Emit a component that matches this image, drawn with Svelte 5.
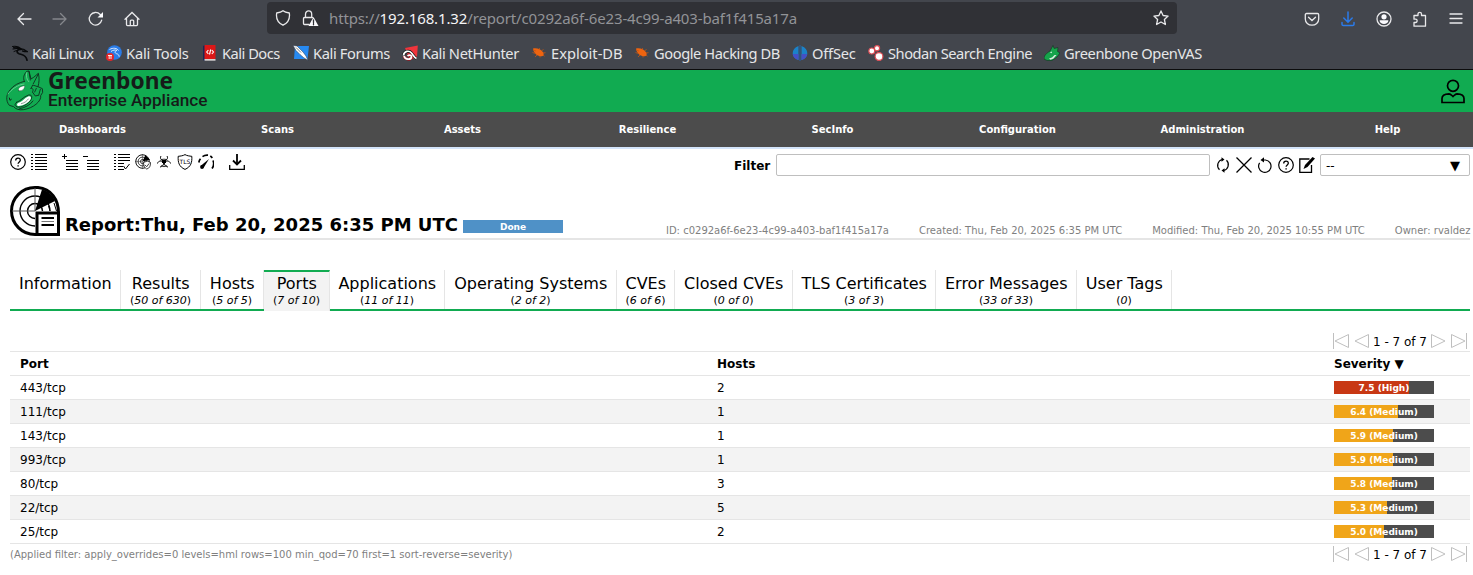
<script>
  const bookmarks = [
    { icon: 'kali', label: 'Kali Linux', w: 94, ls: -0.44 },
    { icon: 'tools', label: 'Kali Tools', w: 96, ls: -0.17 },
    { icon: 'docs', label: 'Kali Docs', w: 91, ls: -0.5 },
    { icon: 'forums', label: 'Kali Forums', w: 109, ls: -0.36 },
    { icon: 'hunter', label: 'Kali NetHunter', w: 129, ls: -0.36 },
    { icon: 'bug', label: 'Exploit-DB', w: 103, ls: 0 },
    { icon: 'bug', label: 'Google Hacking DB', w: 158, ls: -0.42 },
    { icon: 'offsec', label: 'OffSec', w: 76, ls: -0.2 },
    { icon: 'shodan', label: 'Shodan Search Engine', w: 176, ls: -0.48 },
    { icon: 'openvas', label: 'Greenbone OpenVAS', w: 170, ls: -0.38 }
  ];
  const menu = ['Dashboards', 'Scans', 'Assets', 'Resilience', 'SecInfo', 'Configuration', 'Administration', 'Help'];
  const tabs = [
    { label: 'Information', count: '', w: 111 },
    { label: 'Results', count: '50 of 630', w: 80 },
    { label: 'Hosts', count: '5 of 5', w: 63 },
    { label: 'Ports', count: '7 of 10', w: 66, active: true },
    { label: 'Applications', count: '11 of 11', w: 115 },
    { label: 'Operating Systems', count: '2 of 2', w: 172 },
    { label: 'CVEs', count: '6 of 6', w: 58 },
    { label: 'Closed CVEs', count: '0 of 0', w: 118 },
    { label: 'TLS Certificates', count: '3 of 3', w: 143 },
    { label: 'Error Messages', count: '33 of 33', w: 141 },
    { label: 'User Tags', count: '0', w: 95 }
  ];
  const rows = [
    { port: '443/tcp', hosts: 2, severity: 7.5 },
    { port: '111/tcp', hosts: 1, severity: 6.4 },
    { port: '143/tcp', hosts: 1, severity: 5.9 },
    { port: '993/tcp', hosts: 1, severity: 5.9 },
    { port: '80/tcp', hosts: 3, severity: 5.8 },
    { port: '22/tcp', hosts: 5, severity: 5.3 },
    { port: '25/tcp', hosts: 2, severity: 5.0 }
  ];
</script>

{#snippet favicon(name)}
  <svg class="fav" viewBox="0 0 16 16" width="16" height="16">
    {#if name === 'kali'}
      <g fill="none" stroke="#08090b" stroke-linecap="round">
        <path d="M.5 1.500C5 .5 8 2.500 10 4.500M1 4C4 3 7 3.500 9 4.500M1.500 2.500l6 .5" stroke-width="1.100" />
        <path d="M9 4.300C4.500 4 4 7.500 7 8.700c3 1.100 7 .8 8 6.500" stroke-width="1.700" />
        <path d="M9 4.300c2-.5 3.500 0 4 1l2 1.200-2.500 0-2-.5" stroke-width="1.300" />
        <path d="M2 6.500l2.500-1" stroke-width="1" />
      </g>
    {:else if name === 'tools'}
      <circle cx="8.500" cy="7.500" r="7.300" fill="#2a7ce8" />
      <path d="M3.500 4.500C7 2.500 11 3 12.500 5.500M5 6.500c2-1.500 4-2 6-1-2.500.5-2.500 2.500-.5 3.200 2 .5 2.500 1.500 2.700 3" fill="none" stroke="#dcebff" stroke-width="1" />
      <circle cx="4" cy="12" r="4" fill="#e32629" />
      <path d="M2 10.500h4M3.200 10.500v3.500M5 10.500v3.500" stroke="#fff" stroke-width=".9" />
    {:else if name === 'docs'}
      <path d="M1 1l2-1v16l-2-1z" fill="#1c2757" />
      <path d="M2.500 0h11v14h-11z" fill="#dc1717" />
      <path d="M2.500 14h11v1.700h-11z" fill="#d5d2d2" />
      <path d="M6.400 5L4.700 7l1.700 2M9.800 5l1.700 2-1.700 2M8.700 4.500l-1.200 5" fill="none" stroke="#fff" stroke-width="1.100" />
    {:else if name === 'forums'}
      <path d="M2 1h14l-1.500 13H1z" fill="#278af2" />
      <path d="M0 .5l4 .5 6 6 3 4 2 4.500-4.500-3-3.500-3-4-4z" fill="#fff" stroke="#24354b" stroke-width=".5" />
      <path d="M3 2.500l5 5" fill="none" stroke="#222" stroke-width=".6" />
    {:else if name === 'hunter'}
      <path d="M3 3L15.800.5 15 12 8 15z" fill="#ef353c" />
      <path d="M1.500 10.500C2 6 7 5 9.500 8c2 2.500 2.500 4 5 5.500" fill="none" stroke="#111" stroke-width="3" />
      <path d="M2 11c1 4 7 4 7.500 1C9.500 10 7 9.500 5.500 11" fill="none" stroke="#a3141d" stroke-width="3" />
      <path d="M1.500 10.500C2 6 7 5 9.500 8c2 2.500 2.500 4 5 5.500M2 11c1 4 7 4 7.500 1C9.500 10 7 9.500 5.500 11" fill="none" stroke="#fff" stroke-width="1.700" />
    {:else if name === 'bug'}
      <path d="M2 3.500c4-.8 8 .7 10 3.700 1.500 2.400.4 4.300-2.500 4.100C6 11 2.500 8 2 3.500z" fill="#ee6410" />
      <path d="M1.500 7.500l3 1M4 12l2-2M9 12.500v-1.500M8 4.500l.7-1.500M11 5.500l1.500-1M12 8l2.500-.3M12 10l1.500 1.200M2 5l3 1" stroke="#c75512" stroke-width=".8" />
    {:else if name === 'offsec'}
      <path d="M6.500 1v14C-1 13-1.500 4 6.500 1zM9.500 1v14c7.500-2 8-11 0-14z" fill="#1b82c9" />
      <path d="M6.500 9v6C3 14 1 12 .7 9zM9.500 9v6c3.500-1 5.500-3 5.800-6z" fill="#4450c6" />
      <path d="M8 0v16" stroke="#2462a8" stroke-width="1" />
    {:else if name === 'shodan'}
      <g fill="#fff" stroke="#dc4c54" stroke-width="1.200"><circle cx="3.800" cy="6" r="3" /><circle cx="9" cy="3.200" r="2.600" /><circle cx="11" cy="11.500" r="3.900" /></g>
    {:else}
      <path d="M9 .5l1.200 3L14 2.500l-.4 4L16 8l-3 4-5 3.500H3L0 14c0-4 3-6 6-8z" fill="#16a34b" stroke="#12331f" stroke-width=".6" />
      <path d="M5 13.500l3-1 2.500-2.500h2l-3 3.500-3 1.300z" fill="#dbe8df" /><path d="M6 7.500l2-1-.5 1.700z" fill="#fff" />
    {/if}
  </svg>
{/snippet}

{#snippet help()}
  <svg width="16" height="16" viewBox="0 0 16 16" fill="none" stroke="#000"><circle cx="8" cy="8" r="7.300" stroke-width="1.200" /><path d="M5.700 6.400C5.700 3.300 10.300 3.300 10.300 6.200c0 1.700-2.200 1.700-2.200 3.600" stroke-width="1.300" /><path d="M7.400 11.200h1.400v1.400H7.400z" fill="#000" stroke="none" /></svg>
{/snippet}

{#snippet pager()}
  <svg width="16" height="16" viewBox="0 0 16 16"><path d="M.5 0v16M15.500 1.500v13L2 8z" /></svg>
  <svg width="16" height="16" viewBox="0 0 16 16"><path d="M14.500 1.500v13L1 8z" /></svg>
  <span>1 - 7 of 7</span>
  <svg width="16" height="16" viewBox="0 0 16 16"><path d="M1.500 1.500v13L15 8z" /></svg>
  <svg width="16" height="16" viewBox="0 0 16 16"><path d="M15.500 0v16M.5 1.500v13L14 8z" /></svg>
{/snippet}

<div class="page">
  <div class="chrome">
    <div class="navbar">
      <div class="navbtns">
        <svg width="16" height="16" viewBox="0 0 16 16"><path d="M15 8H2M7.500 2.500L2 8l5.500 5.500" /></svg>
        <svg class="dim" width="16" height="16" viewBox="0 0 16 16"><path d="M1 8h13M8.500 2.500L14 8l-5.500 5.500" /></svg>
        <svg width="16" height="16" viewBox="0 0 16 16"><path d="M13.700 9.200A6.300 6.300 0 1 1 12.200 3.500L14 5.300" /><path d="M15 1v5.500H9.500z" fill="#fbfbfe" stroke="none" /></svg>
        <svg width="16" height="16" viewBox="0 0 16 16"><path d="M1 8.300L8 1.500l7 6.800M2.500 7v6.600c0 .6.400 1 1 1h9c.6 0 1-.4 1-1V7M6.300 14.500v-4.500c0-.6.300-.9.900-.9h1.600c.6 0 .9.300.9.900v4.500" /></svg>
      </div>
      <div class="urlbar">
        <svg width="16" height="16" viewBox="0 0 16 16"><path d="M8 .8c2 1.700 4.500 2 6.300 2.200.7 4.500-.4 9.500-6.300 12.200C2.100 12.500 1 7.500 1.700 3 3.500 2.800 6 2.500 8 .8z" /></svg>
        <svg class="lock" width="17" height="16" viewBox="0 0 17 16"><path d="M7 14.500H2.500c-.6 0-1-.4-1-1v-5c0-.7.400-1 1-1h8M3.500 7.500V4.300C3.500-.2 9.700-.2 9.700 4.300v3" /><path d="M11.500 7l5 9h-10z" fill="#fbfbfe" stroke="none" /><path d="M11.500 9.800v3M11.500 13.700v1.100" stroke="#303136" /></svg>
        <span class="url">https://<b>192.168.1.32</b>/report/c0292a6f-6e23-4c99-a403-baf1f415a17a</span>
        <svg width="16" height="16" viewBox="0 0 16 16"><path d="M8 .9l2.100 4.600 5 .6-3.700 3.400 1 5L8 12l-4.400 2.500 1-5L.9 6.100l5-.6z" stroke-linejoin="round" /></svg>
      </div>
      <div class="tools">
        <svg width="16" height="16" viewBox="0 0 16 16"><path d="M2.500 2.500h11c.7 0 1.200.5 1.200 1.200V8c0 3.700-3 6.200-6.700 6.200S1.300 11.700 1.300 8V3.700c0-.7.500-1.200 1.200-1.200zM4.500 6.200L8 9.500l3.500-3.300" /></svg>
        <svg class="blue" width="16" height="16" viewBox="0 0 16 16"><path d="M8 1v10M3.800 7L8 11.200 12.200 7M2 11.500v1.700c0 .8.500 1.300 1.300 1.300h9.400c.8 0 1.300-.5 1.300-1.300v-1.700" /></svg>
        <svg width="16" height="16" viewBox="0 0 16 16"><circle cx="8" cy="8" r="7" /><circle cx="8" cy="5.800" r="2.600" fill="#fbfbfe" stroke="none" /><path d="M3.600 9.300h8.800c0 5-8.800 5-8.800 0z" fill="#fbfbfe" stroke="none" /></svg>
        <svg width="16" height="16" viewBox="0 0 16 16"><path d="M2 15.200V11.500h1.500c2.200 0 2.200-3.300 0-3.300H2V4.500h4V3c0-2.300 3.500-2.300 3.500 0v1.500h4v10.700z" stroke-linejoin="round" /></svg>
        <svg width="16" height="16" viewBox="0 0 16 16"><path d="M2 3h12M2 7.500h12M2 12h12" /></svg>
      </div>
    </div>
    <div class="bookmarks">
      {#each bookmarks as b}
        <div class="bookmark" style="width:{b.w}px">{@render favicon(b.icon)}<span style="letter-spacing:{b.ls}px">{b.label}</span></div>
      {/each}
    </div>
  </div>

  <header>
    <svg class="logo" width="220" height="42" viewBox="0 0 220 42">
      <g transform="scale(.33333) translate(0 -12)" stroke-linejoin="round" stroke-linecap="round">
        <path d="M73 46C68 35 72 25 80 16l7-1 6 24 8-5 14-12c4 15 2 28-1 40l13 6 1 11-6 10c3 16-22 38-52 42-13 2-24-2-29-9l-13-4c-12-14-9-34 2-46 10-14 27-22 43-26z" fill="#11ab51" stroke="#10251a" stroke-width="2.500" />
        <path d="M80 20c-2 11 0 20 6 27M24 84c10-14 30-28 48-30" fill="none" stroke="#71d497" stroke-width="2.500" />
        <path d="M87 17l4 25M115 24l-15 29M113 62l-15-5-4 9M92 67c8-2 9 6 5 11l9 12 8-2M109 67l-5 11M121 70l-5 18M50 109c10-2 20-17 36-22 12-2 11 10 4 18-12 15-34 23-42 16-4-3-4-8 2-12zM99 105c-8 12-26 21-40 23" fill="none" stroke="#10251a" stroke-width="2.500" />
        <path d="M55 110c13-2 18-15 31-19 7-1 9 5 4 12-8 10-25 18-36 17-4-2-4-8 1-10z" fill="#fff" />
        <path d="M64 113c11-3 17-8 21-14" fill="none" stroke="#183d29" stroke-width="1.500" />
        <path d="M56 74c-3-8 4-13 18-15 0 9-6 17-18 15z" fill="#fff" stroke="#102519" stroke-width="1" />
        <path d="M28 96l2 7 4-3" fill="none" stroke="#102519" stroke-width="3" />
      </g>
      <text x="48" y="19" class="brand" textLength="125" lengthAdjust="spacingAndGlyphs">Greenbone</text>
      <text x="48" y="36.200" class="product" textLength="159.500" lengthAdjust="spacingAndGlyphs">Enterprise Appliance</text>
    </svg>
    <svg width="24" height="25" viewBox="0 0 24 25" fill="none" stroke="#000" stroke-width="1.700"><circle cx="12" cy="6.800" r="5.500" /><path d="M1 23.500v-4C1 16.500 4 15 8 14.800c1.500 0 2.500 1.300 4 2.700 1.500-1.400 2.500-2.700 4-2.700 4 .2 7 1.700 7 4.700v4z" /></svg>
  </header>

  <nav>
    {#each menu as item}<span>{item}</span>{/each}
  </nav>

  <main>
    <div class="toolbar">
      <div class="actions">
        {@render help()}
        <svg width="16" height="16" viewBox="0 0 16 16"><path d="M4 .5h12M4 3.500h12M4 6.500h12M4 9.500h12M4 12.500h12M4 15.500h12M0 .5h2M0 3.500h2M0 6.500h2M0 9.500h2M0 12.500h2M0 15.500h2" stroke="#000" /></svg>
        <svg class="group" width="16" height="16" viewBox="0 0 16 16"><path d="M0 2.500h5M2.500 0v5M4 6.500h12M4 9.500h12M4 12.500h12M4 15.500h12" stroke="#000" /></svg>
        <svg width="16" height="16" viewBox="0 0 16 16"><path d="M0 2.500h5M4 6.500h12M4 9.500h12M4 12.500h12M4 15.500h12" stroke="#000" /></svg>
        <svg class="group" width="16" height="16" viewBox="0 0 16 16"><path d="M4 .5h12M4 3.500h12M4 6.500h12M4 9.500h6M4 12.500h5M4 15.500h6M0 .5h2M0 3.500h2M0 6.500h2M0 9.500h2M0 12.500h2M0 15.500h2M9.500 12l2 3 4-5" stroke="#000" fill="none" /></svg>
        <svg width="16" height="16" viewBox="0 0 17 17" fill="none" stroke="#000"><circle cx="8" cy="8" r="7.200" /><circle cx="8" cy="8" r="4.700" stroke-width=".8" /><circle cx="8" cy="8" r="2.200" stroke-width=".8" /><path d="M8 0v16M0 8h8" stroke-width=".4" /><path d="M8 8l3-7 5 5z" fill="#000" stroke="none" /><path d="M9 9l4-1.500L16.500 9c0 4-1 6-4 7-2-1-3.500-3-3.500-7z" fill="#fff" stroke-width=".8" /><path d="M10.500 11.500l2 2L15 10" stroke-width=".8" /></svg>
        <svg width="16" height="16" viewBox="0 0 16 16" fill="none" stroke="#000"><path d="M5 2c-1.500 2.500.5 4.500 3 4.500s4.500-2 3-4.500M1.500 9.500c.5-3 5.500-3.500 6 0 .1 2-1.500 3.200-3.500 3.500M14.500 9.500c-.5-3-5.500-3.500-6 0-.1 2 1.500 3.200 3.500 3.500" stroke-width="1" /><path d="M4.500 6.300c1-1.500 6-1.500 7 0M5 11.500c2 1.500 4 1.500 6 0" stroke-width=".8" /><path d="M6 6h4v3H9l-1 2-1-2H6z" fill="#000" stroke="none" /></svg>
        <svg width="16" height="16" viewBox="0 0 16 16"><path d="M8 .6c2 1.200 4.500 1.500 6.800 1.700.4 6-.8 10.500-6.800 13.100C2 12.800.8 8.300 1.200 2.300 3.500 2.100 6 1.800 8 .6z" fill="none" stroke="#000" /><text x="8" y="9.700" text-anchor="middle" class="tls">TLS</text></svg>
        <svg width="16" height="16" viewBox="0 0 16 16" fill="none" stroke="#000"><path d="M.8 8.500A8 8 0 0 1 2.500 4.700M4.500 2.600a8 8 0 0 1 5.500-1.400M12.300 2a8 8 0 0 1 2 2M15 6.500a8 8 0 0 1-1 8" stroke-width="1.700" /><path d="M2.500 12L11 5 5.500 14z" fill="#000" stroke="none" /><circle cx="4" cy="13" r="1.900" fill="#000" stroke="none" /></svg>
        <svg class="group" width="16" height="16" viewBox="0 0 16 16" fill="none" stroke="#000"><path d="M.7 11v4.300h14.600V11" stroke-width="1.300" /><path d="M8 0v10" stroke-width="1.800" /><path d="M4 6.500l4 4 4-4" stroke-width="1.800" /></svg>
      </div>
      <div class="filter">
        <strong>Filter</strong>
        <input type="text" />
        <div class="ficons">
          <svg width="16" height="16" viewBox="0 0 16 16" fill="none" stroke="#000" stroke-width="1.200"><path d="M4.500 12.700A6 6 0 0 1 7.500 2.500M11.500 3.300A6 6 0 0 1 8.500 13.500" /><path d="M6.500.2L9.500 2.500l-3 2.300zM9.500 11.200L6.500 13.500l3 2.300z" fill="#000" stroke="none" /></svg>
          <svg width="16" height="16" viewBox="0 0 16 16" stroke="#000" stroke-width="1.300"><path d="M.5.500l15 15M15.500.5l-15 15" /></svg>
          <svg width="16" height="16" viewBox="0 0 16 16" fill="none" stroke="#000" stroke-width="1.200"><path d="M5.500 3H8.500A6.200 6.200 0 1 1 2.600 5.800" /><path d="M7 .3L3.500 2.900 7 5.500z" fill="#000" stroke="none" /></svg>
          {@render help()}
          <svg width="16" height="16" viewBox="0 0 16 16"><path d="M10.500 2H.8v13.300h11.700V8" fill="none" stroke="#000" stroke-width="1.300" /><path d="M13.500 0L16 1.500 8.500 10 4.500 12l1.500-4z" fill="#000" /></svg>
        </div>
        <div class="select"><span>--</span><span>▼</span></div>
      </div>
    </div>

    <div class="title">
      <svg width="50" height="50" viewBox="0 0 50 50" fill="none" stroke="#000">
        <path d="M25 1.500h3C41 3 48.500 13 48.500 27v21.500H25a23.500 23.500 0 0 1 0-47z" fill="#fff" stroke-width="3" />
        <path d="M25 40A15 15 0 1 1 40 25M25 32.500A7.500 7.500 0 1 1 32.500 25" stroke-width="1.400" />
        <path d="M25 2v23M2 25h23" stroke="#555" stroke-width="1" />
        <path d="M25 25L32 3.500c6 1.500 11 6 13 11.500z" fill="#000" stroke="none" />
        <path d="M38.500 20l1.500 5M44 17l2.500 8" stroke-width="1" />
        <path d="M27 27h21.500v21.500H27z" fill="#fff" stroke-width="3" />
        <path d="M31.500 32h12.500M31.500 39h12.500" stroke-width="1.800" />
        <path d="M31.500 35.500h12.500" stroke="#777" stroke-width="1" />
      </svg>
      <h1>Report:Thu, Feb 20, 2025 6:35 PM UTC</h1>
      <div class="status">Done</div>
      <div class="meta">
        <span>ID: c0292a6f-6e23-4c99-a403-baf1f415a17a</span>
        <span>Created: Thu, Feb 20, 2025 6:35 PM UTC</span>
        <span>Modified: Thu, Feb 20, 2025 10:55 PM UTC</span>
        <span>Owner: rvaldez</span>
      </div>
    </div>

    <div class="tabs">
      {#each tabs as t}
        <div class="tab" class:active={t.active} style="width:{t.w}px">
          <span>{t.label}</span>
          {#if t.count}<small>(<i>{t.count}</i>)</small>{/if}
        </div>
      {/each}
    </div>

    <div class="pager top">{@render pager()}</div>
    <div class="table">
      <div class="row head"><span>Port</span><span>Hosts</span><span>Severity ▼</span></div>
      {#each rows as r}
        <div class="row">
          <span>{r.port}</span><span>{r.hosts}</span>
          <div class="bar"><div class="fill" class:high={r.severity >= 7} style="width:{r.severity * 10}%"></div><b>{r.severity.toFixed(1)} ({r.severity >= 7 ? 'High' : 'Medium'})</b></div>
        </div>
      {/each}
    </div>
    <div class="foot">
      <span>(Applied filter: apply_overrides=0 levels=hml rows=100 min_qod=70 first=1 sort-reverse=severity)</span>
      <div class="pager">{@render pager()}</div>
    </div>
  </main>
</div>

<style>
  :global(body) { background: #fff; overflow: hidden; }
  * { box-sizing: border-box; }
  svg { display: block; flex: none; }
  .logo { overflow: visible; }
  .page { width: 1473px; height: 575px; overflow: hidden; font: 12px/16px "DejaVu Sans", sans-serif; color: #000; white-space: nowrap; }
  .chrome { height: 70px; background: #43464d; border-bottom: 1px solid #0c0c0d; font-family: "Noto Sans", sans-serif; color: #e6e6e8; }
  .navbar { height: 37px; display: flex; align-items: center; }
  .navbar svg { fill: none; stroke: #e9e9eb; stroke-width: 1.3; stroke-linecap: round; }
  .navbtns { display: flex; gap: 20px; width: 267px; padding-left: 16px; }
  .navbar .dim { stroke: #85878c; }
  .navbar .blue { stroke: #2b7bea; stroke-width: 1.5; }
  .urlbar { width: 910px; height: 32px; margin-top: -1px; border-radius: 4px; background: #303136; display: flex; align-items: center; padding: 0 8px; }
  .lock { margin-left: 11px; }
  .url { flex: 1; margin-left: 10px; font-size: 15px; line-height: 20px; letter-spacing: -0.14px; color: #929397; }
  .url b { color: #f5f5f7; font-weight: 400; }
  .tools { display: flex; gap: 20px; margin-left: 127px; }
  .bookmarks { height: 32px; padding-left: 12px; display: flex; align-items: center; }
  .bookmark { display: flex; align-items: center; gap: 4px; font-size: 14.67px; line-height: 20px; flex: none; }
  header { height: 42px; background: #11ab51; display: flex; align-items: center; justify-content: space-between; padding-right: 8px; }
  .brand { font: 700 23px "Noto Sans", sans-serif; fill: #161b19; }
  .product { font: 500 17px Roboto, sans-serif; fill: #161b19; }
  nav { height: 35px; background: #4c4c4c; display: grid; grid-template-columns: repeat(8, 185px); align-items: center; text-align: center; color: #fff; font-weight: 700; font-size: 10px; }
  main { border-top: 2px solid #d3e4fa; padding: 5px 3px 0 10px; }
  .toolbar { height: 32px; display: flex; justify-content: space-between; align-items: flex-start; }
  .actions { display: flex; gap: 5px; }
  .group { margin-left: 10px; }
  .tls { font: 6px "DejaVu Sans", sans-serif; }
  .filter { display: flex; align-items: center; height: 22px; }
  .filter strong { width: 42px; padding-top: 1px; }
  input { width: 434px; height: 22px; border: 1px solid #bfbfbf; border-radius: 2px; padding: 0; background: #fff; }
  .ficons { display: flex; gap: 5px; width: 110px; padding-left: 5px; }
  .select { width: 150px; height: 22px; border: 1px solid #bfbfbf; border-radius: 2px; display: flex; justify-content: space-between; align-items: center; padding: 1px 9px 0 5px; }
  .select span:last-child { font-size: 13px; }
  .title { height: 54px; border-bottom: 2px solid #e5e5e5; display: flex; align-items: flex-start; }
  h1 { font-size: 18px; line-height: 22px; margin: 28px 0 0 5px; width: 398px; }
  .status { width: 100px; height: 13px; margin-top: 34px; background: #4f91c7; color: #fff; font-size: 9px; line-height: 14px; font-weight: 700; text-align: center; }
  .meta { flex: 1; display: flex; justify-content: flex-end; gap: 30px; color: #7f7f7f; font-size: 10px; margin: 37px -0.5px 0 0; }
  .tabs { height: 41px; margin-top: 30px; display: flex; border-bottom: 2px solid #11ab51; }
  .tab { flex: none; height: 39px; border-right: 1px solid #e5e5e5; text-align: center; font-size: 16px; line-height: 19px; padding: 4px 0 0 0.5px; }
  .tab span, .tab small { display: block; }
  .tab small { font-size: 11px; line-height: 16px; margin-left: -0.5px; }
  .tab.active { height: 41px; background: #f3f3f3; border-top: 2px solid #11ab51; padding-top: 2px; }
  .pager { display: flex; align-items: flex-start; justify-content: flex-end; gap: 5px; padding-right: 3px; height: 18px; }
  .pager span { margin: 1px -2px 0 -2px; }
  .pager svg { fill: none; stroke: #bfbfbf; stroke-width: 1; }
  .top { margin-top: 22px; height: 18px; }
  .table { border-top: 1px solid #e5e5e5; }
  .row { height: 24px; display: grid; grid-template-columns: 697px 617px 100px; align-items: center; padding-left: 10px; border-bottom: 1px solid #e5e5e5; }
  .row:nth-child(odd):not(.head) { background: #f3f3f3; }
  .head { font-weight: 700; }
  .bar { height: 13px; background: #4c4c4c; color: #fff; display: grid; grid-template-rows: 13px; font-size: 9px; line-height: 14px; text-align: center; }
  .fill, .bar b { grid-area: 1 / 1; }
  .fill { background: #f0a519; }
  .fill.high { background: #c83814; }
  .foot { display: flex; justify-content: space-between; padding-top: 2px; color: #7f7f7f; font-size: 10px; }
  .foot > span { line-height: 17px; }
  .foot .pager { color: #000; font-size: 12px; }
</style>
